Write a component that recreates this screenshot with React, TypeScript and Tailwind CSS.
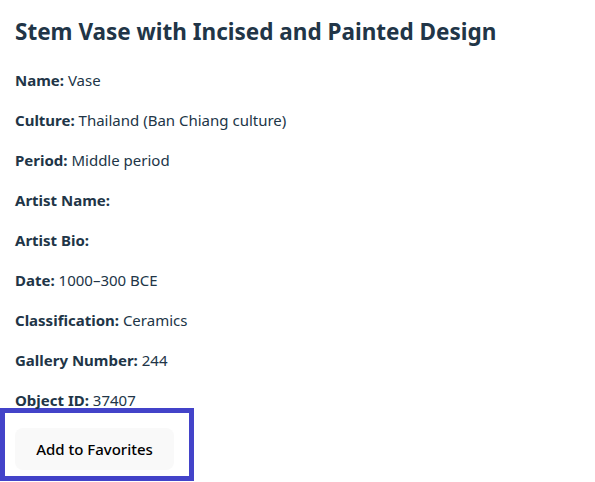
import React from 'react';

const rows: [string, string][] = [
    ['Name:', 'Vase'],
    ['Culture:', 'Thailand (Ban Chiang culture)'],
    ['Period:', 'Middle period'],
    ['Artist Name:', ''],
    ['Artist Bio:', ''],
    ['Date:', '1000–300 BCE'],
    ['Classification:', 'Ceramics'],
    ['Gallery Number:', '244'],
    ['Object ID:', '37407'],
];

const App = () => {
    return (
        <div className="min-h-screen bg-white text-[#213547] font-['Noto_Sans',sans-serif]">
            <div className="px-[15px] pt-[14px]">
                <h2 className="text-[22.5px] leading-[36px] font-bold">Stem Vase with Incised and Painted Design</h2>
                <div className="mt-[18px] flex flex-col gap-4">
                    {rows.map(([label, value]) => (
                        <p key={label} className="text-[15px] leading-[24px]">
                            <span className="font-bold">{label}</span> {value}
                        </p>
                    ))}
                </div>
            </div>
            <div className="-mt-1 w-[194px] h-[73px] border-[5px] border-[#4343c9] pl-[10px] pt-[15px]">
                <button className="h-[42px] w-[159px] rounded-lg bg-[#f9f9f9] text-[15px] font-medium text-black">
                    Add to Favorites
                </button>
            </div>
        </div>
    );
};

export default App;
